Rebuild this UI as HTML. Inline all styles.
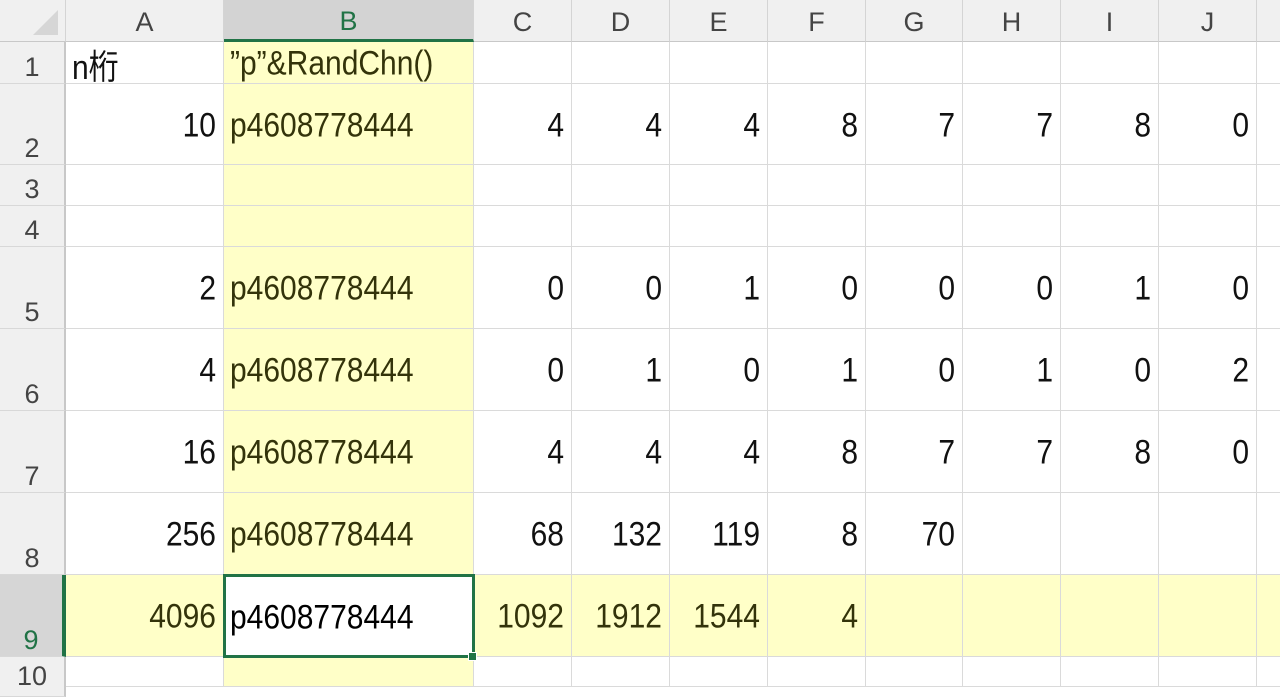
<!DOCTYPE html>
<html><head><meta charset="utf-8"><style>
*{margin:0;padding:0;box-sizing:border-box}
body{width:1280px;height:670px;overflow:hidden;background:#fff;position:relative;font-family:"Liberation Sans","Noto Sans CJK JP",sans-serif}
.c{position:absolute;border-right:1px solid #dadada;border-bottom:1px solid #dadada;display:flex;align-items:center;font-size:30px;color:#111;white-space:nowrap;overflow:visible;padding-top:3px}
.c span,.t{display:inline-block;transform:scaleY(1.15)}
.r{justify-content:flex-end;padding-right:7px}
.l{justify-content:flex-start;padding-left:6px}
.y{background:#ffffc8;color:#33330a}
.ch{position:absolute;top:0;height:42px;background:#f0f0f0;border-right:1px solid #d4d4d4;border-bottom:1px solid #c8c8c8;display:flex;align-items:center;justify-content:center;font-size:27px;color:#444;padding-top:4px}
.rh{position:absolute;left:0;width:66px;background:#f0f0f0;border-right:2px solid #c8c8c8;border-bottom:1px solid #d8d8d8;display:flex;align-items:flex-end;justify-content:center;font-size:27px;color:#444;padding-bottom:0px}
</style></head><body>
<div class="ch" style="left:0;width:66px"><svg width="66" height="42" style="position:absolute;left:0;top:0"><polygon points="58,10 58,35 33,35" fill="#d6d6d6"/></svg></div>
<div class="ch" style="left:66px;width:158px">A</div>
<div class="ch" style="left:224px;width:250px;background:#d3d3d3;color:#217346;border-bottom:3px solid #217346">B</div>
<div class="ch" style="left:474px;width:98px">C</div>
<div class="ch" style="left:572px;width:98px">D</div>
<div class="ch" style="left:670px;width:98px">E</div>
<div class="ch" style="left:768px;width:98px">F</div>
<div class="ch" style="left:866px;width:97px">G</div>
<div class="ch" style="left:963px;width:98px">H</div>
<div class="ch" style="left:1061px;width:98px">I</div>
<div class="ch" style="left:1159px;width:98px">J</div>
<div class="ch" style="left:1257px;width:40px"></div>

<div class="rh" style="top:42px;height:42px">1</div>
<div class="rh" style="top:84px;height:81px">2</div>
<div class="rh" style="top:165px;height:41px">3</div>
<div class="rh" style="top:206px;height:41px">4</div>
<div class="rh" style="top:247px;height:82px">5</div>
<div class="rh" style="top:329px;height:82px">6</div>
<div class="rh" style="top:411px;height:82px">7</div>
<div class="rh" style="top:493px;height:82px">8</div>
<div class="rh" style="top:575px;height:82px;background:#d6d6d6;color:#217346;border-right:4px solid #217346">9</div>
<div class="rh" style="top:657px;height:40px;align-items:flex-start;padding-top:4px">10</div>

<div id="g"></div>
<script>
var cols=[[66,158],[224,250],[474,98],[572,98],[670,98],[768,98],[866,97],[963,98],[1061,98],[1159,98],[1257,40]];
var rows=[[42,42],[84,81],[165,41],[206,41],[247,82],[329,82],[411,82],[493,82],[575,82],[657,30]];
var P="p4608778444";
var data={
0:[["n桁","l"],["”p”&RandChn()","l"]],
1:["10",P,"4","4","4","8","7","7","8","0"],
4:["2",P,"0","0","1","0","0","0","1","0"],
5:["4",P,"0","1","0","1","0","1","0","2"],
6:["16",P,"4","4","4","8","7","7","8","0"],
7:["256",P,"68","132","119","8","70"],
8:["4096",P,"1092","1912","1544","4"]};
var h="";
for(var r=0;r<rows.length;r++){for(var c=0;c<cols.length;c++){
var t="",a=c==1?"l":"r";var d=data[r];
if(d&&d[c]!==undefined){if(Array.isArray(d[c])){t=d[c][0];a=d[c][1];}else t=d[c];}
var y=(c==1||r==8)?" y":"";
h+='<div class="c '+a+y+'" style="left:'+cols[c][0]+'px;top:'+rows[r][0]+'px;width:'+cols[c][1]+'px;height:'+rows[r][1]+'px">'+(t?'<span>'+t+'</span>':'')+'</div>';}}
document.getElementById("g").innerHTML=h;
</script>
<div style="position:absolute;left:223px;top:574px;width:252px;height:84px;border:3px solid #217346;background:#fff;display:flex;align-items:center;padding-left:4px;padding-top:3px;font-size:30px;color:#000"><span class="t">p4608778444</span></div>
<div style="position:absolute;left:468px;top:652px;width:9px;height:9px;background:#217346;border:1px solid #fff"></div>
</body></html>
